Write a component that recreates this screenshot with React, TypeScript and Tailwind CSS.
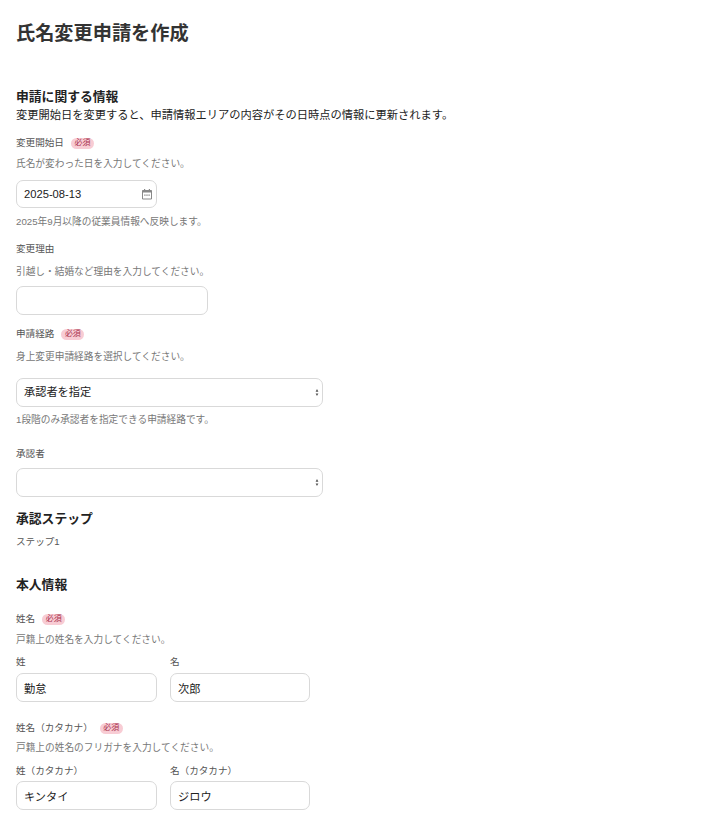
const FONT = "font-['Liberation_Sans','Noto_Sans_CJK_JP',sans-serif]"

function Required() {
  return (
    <span className="ml-[7px] inline-flex h-[11px] w-[23px] items-center justify-center rounded-full bg-[#f8ccd4] text-[8px] leading-none text-[#a8324e]">
      必須
    </span>
  )
}

function Label({ text, required, className }: { text: string; required?: boolean; className?: string }) {
  return (
    <div className={`flex items-center text-[9.6px] leading-[12px] text-[#555] ${className ?? ''}`}>
      {text}
      {required && <Required />}
    </div>
  )
}

function Hint({ text, className }: { text: string; className?: string }) {
  return <p className={`text-[9.7px] leading-[12px] text-[#777] ${className ?? ''}`}>{text}</p>
}

function TextBox({ value, className }: { value?: string; className?: string }) {
  return (
    <input
      readOnly
      value={value ?? ''}
      className={`block h-[29px] rounded-[7px] border border-[#d9d9d9] bg-white px-[7px] text-[11.2px] text-[#222] outline-none ${className ?? ''}`}
    />
  )
}

function SelectBox({ value, className }: { value?: string; className?: string }) {
  return (
    <div className={`relative h-[29px] w-[307px] ${className ?? ''}`}>
      <select className="block h-full w-full appearance-none rounded-[7px] border border-[#d9d9d9] bg-white px-[7px] text-[11.2px] text-[#222] outline-none">
        <option>{value ?? ''}</option>
      </select>
      <svg viewBox="0 0 4 8" className="pointer-events-none absolute right-[4px] top-[11px] h-[7px] w-[4px]" aria-hidden="true">
        <path d="M2 0 3.6 3H.4zM2 8 .4 5h3.2z" fill="#555" />
      </svg>
    </div>
  )
}

export default function App() {
  return (
    <div className={`min-h-[825px] bg-white px-4 pt-[22px] ${FONT}`}>
      <h1 className="text-[19.2px] font-bold leading-[24px] text-[#333]">氏名変更申請を作成</h1>

      <h2 className="mt-[43px] text-[12.8px] font-bold leading-[16px] text-[#222]">申請に関する情報</h2>
      <p className="mt-[3px] text-[11.25px] leading-[14px] text-[#222]">変更開始日を変更すると、申請情報エリアの内容がその日時点の情報に更新されます。</p>

      <Label text="変更開始日" required className="mt-[15px]" />
      <Hint text="氏名が変わった日を入力してください。" className="mt-[9px]" />
      <div className="relative mt-[10px] h-[28px] w-[141px]">
        <div className="flex h-full items-center rounded-[7px] border border-[#d9d9d9] bg-white px-[7px] text-[11.2px] text-[#222]">2025-08-13</div>
        <svg viewBox="0 0 12 12" className="absolute right-[4px] top-[8px] h-[12px] w-[12px]" aria-hidden="true">
          <path d="M1.5 2.5h9v8.5h-9z" fill="none" stroke="#888" strokeWidth="1" />
          <path d="M1.5 2.5h9v2h-9zM3 1h1.2v2H3zM7.8 1H9v2H7.8z" fill="#888" />
          <path d="M3.2 6.5h1.4v1.3H3.2zM5.3 6.5h1.4v1.3H5.3zM7.4 6.5h1.4v1.3H7.4z" fill="#888" />
        </svg>
      </div>
      <Hint text="2025年9月以降の従業員情報へ反映します。" className="mt-[8px]" />

      <Label text="変更理由" className="mt-[15px]" />
      <Hint text="引越し・結婚など理由を入力してください。" className="mt-[11px]" />
      <TextBox className="mt-[8px] w-[192px]" />

      <Label text="申請経路" required className="mt-[13px]" />
      <Hint text="身上変更申請経路を選択してください。" className="mt-[11px]" />
      <SelectBox value="承認者を指定" className="mt-[15px]" />
      <Hint text="1段階のみ承認者を指定できる申請経路です。" className="mt-[7px]" />

      <Label text="承認者" className="mt-[22px]" />
      <SelectBox className="mt-[8px]" />

      <h3 className="mt-[14px] text-[12.8px] font-bold leading-[16px] text-[#222]">承認ステップ</h3>
      <p className="mt-[9px] text-[9.6px] leading-[12px] text-[#555]">ステップ1</p>

      <h2 className="mt-[29px] text-[12.8px] font-bold leading-[16px] text-[#222]">本人情報</h2>

      <Label text="姓名" required className="mt-[20px]" />
      <Hint text="戸籍上の姓名を入力してください。" className="mt-[9px]" />
      <div className="mt-[10px] flex gap-[13px]">
        <div>
          <Label text="姓" />
          <TextBox value="勤怠" className="mt-[5px] w-[141px]" />
        </div>
        <div>
          <Label text="名" />
          <TextBox value="次郎" className="mt-[5px] w-[140px]" />
        </div>
      </div>

      <Label text="姓名（カタカナ）" required className="mt-[20px]" />
      <Hint text="戸籍上の姓名のフリガナを入力してください。" className="mt-[8px]" />
      <div className="mt-[11px] flex gap-[13px]">
        <div>
          <Label text="姓（カタカナ）" />
          <TextBox value="キンタイ" className="mt-[4px] w-[141px]" />
        </div>
        <div>
          <Label text="名（カタカナ）" />
          <TextBox value="ジロウ" className="mt-[4px] w-[140px]" />
        </div>
      </div>
    </div>
  )
}
